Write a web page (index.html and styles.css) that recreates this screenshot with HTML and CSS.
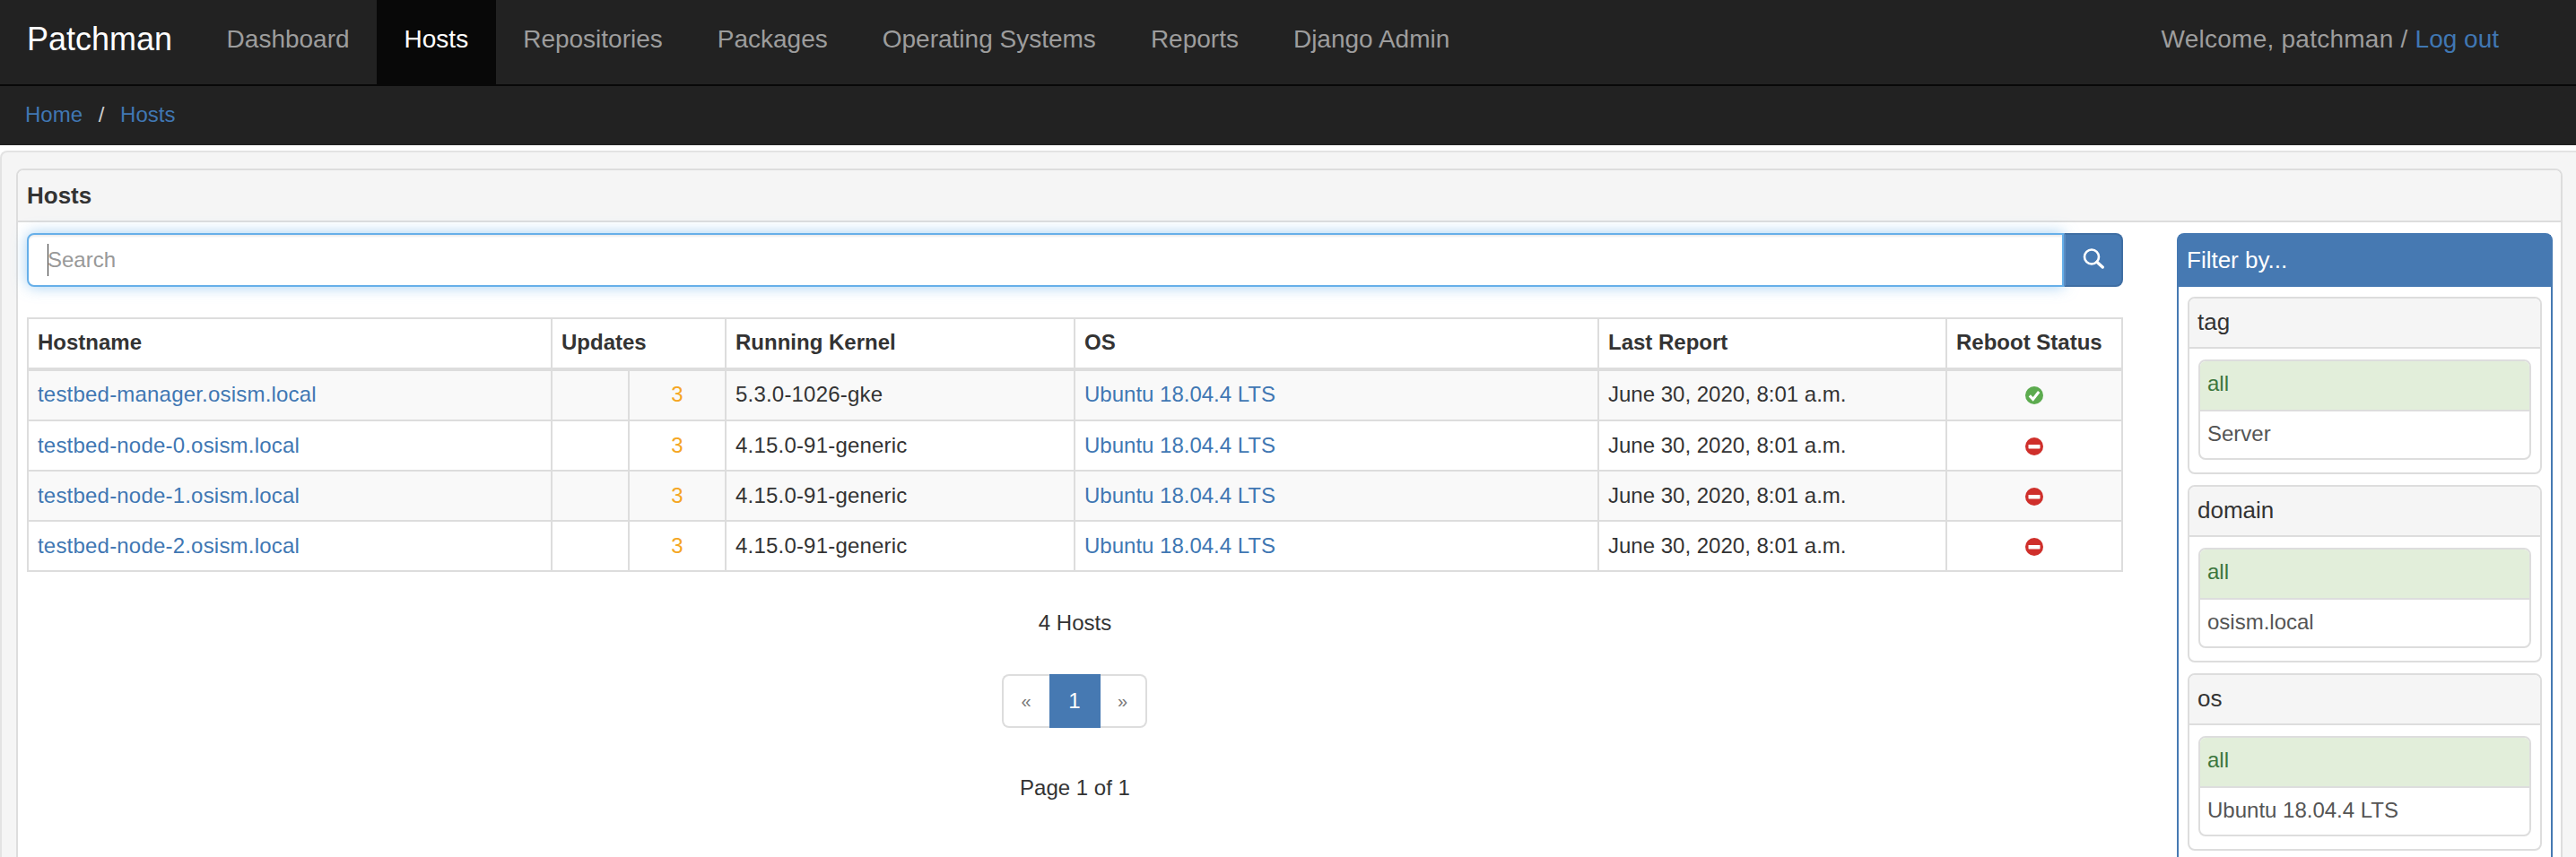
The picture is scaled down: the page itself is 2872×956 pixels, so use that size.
FILE: index.html
```html
<!DOCTYPE html>
<html lang="en">
<head>
<meta charset="UTF-8">
<title>Hosts - Patchman</title>
<link rel="stylesheet" href="styles.css">
</head>
<body>
    <nav class="navbar">
        <a class="brand" href="#">Patchman</a>
        <ul class="nav-links">
            <li><a href="#">Dashboard</a></li>
            <li class="active"><a href="#">Hosts</a></li>
            <li><a href="#">Repositories</a></li>
            <li><a href="#">Packages</a></li>
            <li><a href="#">Operating Systems</a></li>
            <li><a href="#">Reports</a></li>
            <li><a href="#">Django Admin</a></li>
        </ul>
        <div class="welcome"><span class="user">Welcome, patchman / </span><a href="#">Log out</a></div>
    </nav>
    <div class="breadcrumb">
        <a href="#">Home</a>
        <span class="sep">/</span>
        <a href="#">Hosts</a>
    </div>

    <div class="well">
        <div class="panel">
            <div class="panel-heading"><b>Hosts</b></div>
            <div class="panel-body">
                <div class="main">
                    <form class="search">
                        <div class="search-box">
                            <input type="text" placeholder="Search">
                            <span class="caret"></span>
                        </div>
                        <button type="button" aria-label="Search">
                            <svg class="search-icon" width="24" height="24" viewBox="0 0 24 24" fill="none" stroke="#fff">
                                <circle cx="10" cy="9.5" r="8" stroke-width="2.6"/>
                                <path d="M15.8 15.3 L22.2 21" stroke-width="3.4" stroke-linecap="round"/>
                            </svg>
                        </button>
                    </form>

                    <table class="hosts">
                        <colgroup>
                            <col class="c-host"><col class="c-upd1"><col class="c-upd2"><col class="c-kernel">
                            <col class="c-os"><col class="c-report"><col class="c-reboot">
                        </colgroup>
                        <thead>
                            <tr>
                                <th>Hostname</th>
                                <th colspan="2">Updates</th>
                                <th>Running Kernel</th>
                                <th>OS</th>
                                <th>Last Report</th>
                                <th>Reboot Status</th>
                            </tr>
                        </thead>
                        <tbody>
                            <tr>
                                <td class="wide"><a href="#">testbed-manager.osism.local</a></td>
                                <td></td>
                                <td class="count">3</td>
                                <td class="wide">5.3.0-1026-gke</td>
                                <td><a href="#">Ubuntu 18.04.4 LTS</a></td>
                                <td>June 30, 2020, 8:01 a.m.</td>
                                <td class="status">
                                    <svg width="20" height="20" viewBox="0 0 20 20">
                                        <circle cx="10" cy="10" r="10" fill="#5cab4f"/>
                                        <path d="M4.8 10.4 L8.6 14.4 L15.2 6" fill="none" stroke="#fff" stroke-width="3"/>
                                    </svg>
                                </td>
                            </tr>
                            <tr>
                                <td class="wide"><a href="#">testbed-node-0.osism.local</a></td>
                                <td></td>
                                <td class="count">3</td>
                                <td class="wide">4.15.0-91-generic</td>
                                <td><a href="#">Ubuntu 18.04.4 LTS</a></td>
                                <td>June 30, 2020, 8:01 a.m.</td>
                                <td class="status">
                                    <svg width="20" height="20" viewBox="0 0 20 20">
                                        <circle cx="10" cy="10" r="10" fill="#cf2f2b"/>
                                        <rect x="3.5" y="8" width="13" height="4.4" rx="0.6" fill="#fff"/>
                                    </svg>
                                </td>
                            </tr>
                            <tr>
                                <td class="wide"><a href="#">testbed-node-1.osism.local</a></td>
                                <td></td>
                                <td class="count">3</td>
                                <td class="wide">4.15.0-91-generic</td>
                                <td><a href="#">Ubuntu 18.04.4 LTS</a></td>
                                <td>June 30, 2020, 8:01 a.m.</td>
                                <td class="status">
                                    <svg width="20" height="20" viewBox="0 0 20 20">
                                        <circle cx="10" cy="10" r="10" fill="#cf2f2b"/>
                                        <rect x="3.5" y="8" width="13" height="4.4" rx="0.6" fill="#fff"/>
                                    </svg>
                                </td>
                            </tr>
                            <tr>
                                <td class="wide"><a href="#">testbed-node-2.osism.local</a></td>
                                <td></td>
                                <td class="count">3</td>
                                <td class="wide">4.15.0-91-generic</td>
                                <td><a href="#">Ubuntu 18.04.4 LTS</a></td>
                                <td>June 30, 2020, 8:01 a.m.</td>
                                <td class="status">
                                    <svg width="20" height="20" viewBox="0 0 20 20">
                                        <circle cx="10" cy="10" r="10" fill="#cf2f2b"/>
                                        <rect x="3.5" y="8" width="13" height="4.4" rx="0.6" fill="#fff"/>
                                    </svg>
                                </td>
                            </tr>
                        </tbody>
                    </table>

                    <p class="total">4 Hosts</p>
                    <ul class="pagination">
                        <li class="arrow"><a href="#">&laquo;</a></li>
                        <li class="current"><a href="#">1</a></li>
                        <li class="arrow"><a href="#">&raquo;</a></li>
                    </ul>
                    <p class="page-count">Page 1 of 1</p>
                </div>

                <aside class="filter">
                    <div class="filter-heading">Filter by...</div>
                    <div class="filter-body">
                        <div class="filter-group">
                            <div class="group-heading">tag</div>
                            <ul class="list">
                                <li class="selected">all</li>
                                <li>Server</li>
                            </ul>
                        </div>
                        <div class="filter-group">
                            <div class="group-heading">domain</div>
                            <ul class="list">
                                <li class="selected">all</li>
                                <li>osism.local</li>
                            </ul>
                        </div>
                        <div class="filter-group">
                            <div class="group-heading">os</div>
                            <ul class="list">
                                <li class="selected">all</li>
                                <li>Ubuntu 18.04.4 LTS</li>
                            </ul>
                        </div>
                    </div>
                </aside>
            </div>
        </div>
    </div>
</body>
</html>
```

FILE: styles.css
```css
html, body {
    height: 956px;
    overflow: hidden;
}
body {
    margin: 0;
    font-family: "Liberation Sans", Arial, sans-serif;
    font-size: 24px;
    line-height: 40px;
    color: #333;
    background-color: #fff;
}
a {
    color: #4077b3;
    text-decoration: none;
}
ul {
    list-style: none;
    margin: 0;
    padding: 0;
}

/* top bar */
.navbar {
    display: flex;
    height: 94px;
    background-color: #222;
    border-bottom: 2px solid #080808;
    font-size: 28px;
}
.brand {
    padding: 24px 30px 0 30px;
    font-size: 36px;
    color: #fff;
}
.nav-links {
    display: flex;
}
.nav-links a {
    display: block;
    height: 94px;
    box-sizing: border-box;
    padding: 24px 30.5px 0;
    color: #9d9d9d;
}
.nav-links .active a {
    background-color: #080808;
    color: #fff;
}
.welcome {
    margin-left: auto;
    padding: 24px 86px 0 0;
    color: #9d9d9d;
}
.user {
    letter-spacing: 0.25px;
}
.breadcrumb {
    height: 40px;
    padding: 12px 28px 14px;
    background-color: #222;
}
.sep {
    margin: 0 11px;
    color: #ccc;
}

/* page body */
.well {
    margin-top: 6px;
    padding: 18px 15px 0 16px;
    background-color: #f5f5f5;
    border: 2px solid #e3e3e3;
    border-right: none;
    border-radius: 8px 0 0 0;
}
.panel {
    background-color: #fff;
    border: 2px solid #ddd;
    border-radius: 8px;
}
.panel-heading {
    height: 56px;
    padding-left: 10px;
    background-color: #f5f5f5;
    border-bottom: 2px solid #ddd;
    border-radius: 6px 6px 0 0;
    font-size: 26px;
    line-height: 56px;
}
.panel-body {
    display: flex;
    justify-content: space-between;
    padding: 12px 9px 0 10px;
}
.main {
    width: 2337px;
}

/* search */
.search {
    display: flex;
    height: 60px;
}
.search-box {
    position: relative;
    flex: 1;
}
.search-box input {
    display: block;
    width: 100%;
    height: 60px;
    box-sizing: border-box;
    padding: 0 21px;
    border: 2px solid #66afe9;
    border-radius: 8px 0 0 8px;
    outline: none;
    box-shadow: inset 0 2px 2px rgba(0, 0, 0, 0.075), 0 0 16px rgba(102, 175, 233, 0.6);
    font-family: inherit;
    font-size: 24px;
    color: #555;
}
.search-box input::placeholder {
    color: #999;
}
.caret {
    position: absolute;
    left: 23px;
    top: 12px;
    width: 1px;
    height: 36px;
    background-color: #333;
}
.search button {
    position: relative;
    width: 66px;
    padding: 0;
    display: flex;
    align-items: center;
    justify-content: center;
    background-color: #4679b2;
    border: 2px solid #3f6ea3;
    border-left-color: #5a8cc2;
    border-radius: 0 8px 8px 0;
}
.search-icon {
    margin-bottom: 2px;
}

/* hosts table */
.hosts {
    table-layout: fixed;
    width: 2337px;
    margin-top: 34px;
    border-collapse: collapse;
    font-size: 24px;
}
.c-host { width: 584px; }
.c-upd1 { width: 86px; }
.c-upd2 { width: 108px; }
.c-kernel { width: 389px; }
.c-os { width: 584px; }
.c-report { width: 388px; }
.c-reboot { width: 196px; }
.hosts th,
.hosts td {
    padding: 0 10px;
    border: 2px solid #ddd;
    text-align: left;
    box-sizing: border-box;
    height: 56px;
}
.hosts th {
    height: 57px;
    padding-bottom: 2px;
    border-bottom-width: 4px;
}
.hosts tbody tr:first-child td {
    height: 57px;
    padding-bottom: 2px;
}
.hosts tbody tr:nth-child(odd) {
    background-color: #f9f9f9;
}
.hosts .wide {
    letter-spacing: 0.2px;
}
.hosts .count {
    text-align: center;
    color: #f5a623;
}
.hosts td.status {
    padding: 2px 0 0;
    text-align: center;
    line-height: 0;
}

/* under the table */
.total,
.page-count {
    margin: 0;
    text-align: center;
}
.total {
    margin-top: 37px;
}
.page-count {
    margin-top: 47px;
}
.pagination {
    display: flex;
    justify-content: center;
    margin-top: 37px;
    padding-right: 2px;
    height: 60px;
}
.pagination a {
    display: block;
    height: 60px;
    box-sizing: border-box;
    text-align: center;
    line-height: 56px;
}
.arrow a {
    width: 53px;
    border: 2px solid #ddd;
    font-size: 20px;
    color: #777;
}
.arrow:first-child a {
    border-right: none;
    border-radius: 8px 0 0 8px;
}
.arrow:last-child a {
    width: 52px;
    border-left: none;
    border-radius: 0 8px 8px 0;
}
.current a {
    width: 57px;
    background-color: #4679b2;
    color: #fff;
    line-height: 60px;
}

/* filter sidebar */
.filter {
    width: 419px;
    box-sizing: border-box;
    border: 2px solid #4679b2;
    border-radius: 8px 8px 0 0;
}
.filter-heading {
    height: 58px;
    padding-left: 9px;
    background-color: #4679b2;
    color: #fff;
    font-size: 26px;
    line-height: 56px;
}
.filter-body {
    padding: 11px 10px 0;
}
.filter-group {
    margin-bottom: 12px;
    border: 2px solid #ddd;
    border-radius: 8px;
    padding-bottom: 14px;
    height: 198px;
    box-sizing: border-box;
}
.group-heading {
    height: 54px;
    padding-left: 9px;
    background-color: #f5f5f5;
    border-bottom: 2px solid #ddd;
    border-radius: 6px 6px 0 0;
    font-size: 26px;
    line-height: 53px;
}
.list {
    margin: 12px 10px 0;
    border: 2px solid #ddd;
    border-radius: 8px;
    font-size: 24px;
    color: #555;
}
.list li {
    height: 52px;
    padding-left: 8px;
    line-height: 50px;
}
.list .selected {
    height: 54px;
    background-color: #e2eeda;
    border-bottom: 2px solid #ddd;
    border-radius: 6px 6px 0 0;
    color: #3c763d;
}
```
